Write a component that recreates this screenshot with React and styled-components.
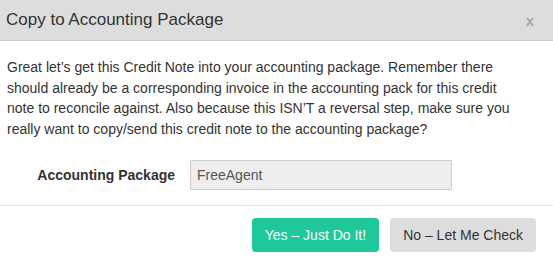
import React from 'react'
import styled, { createGlobalStyle } from "styled-components";

const GlobalStyle = createGlobalStyle`
    body {
        margin: 0;
        background: #fff;
        font-family: "Liberation Sans", Arial, sans-serif;
        color: #333;
    }
`;

const Modal = styled.div`
    width: 553px;
    height: 261px;
    background: #fff;
    display: flex;
    flex-direction: column;
    overflow: hidden;
`;

const Header = styled.div`
    height: 40px;
    background: #dddddd;
    border-bottom: 1px solid #cfcfcf;
    display: flex;
    align-items: center;
    justify-content: space-between;
    padding: 0 19px 0 6px;

    h4 {
        margin: 0;
        font-size: 17px;
        font-weight: normal;
        color: #333;
    }
`;

const Close = styled.button`
    border: 0;
    background: transparent;
    font-family: inherit;
    font-size: 15px;
    font-weight: bold;
    color: #a8a8a8;
    padding: 0;
    cursor: pointer;
`;

const Body = styled.div`
    padding: 16px 30px 0 7px;
    border-bottom: 1px solid #e5e5e5;

    p {
        margin: 0 0 21px;
        font-size: 14px;
        line-height: 20.5px;
    }
`;

const FormRow = styled.div`
    display: flex;
    align-items: center;
    gap: 15px;
    margin-bottom: 15px;

    label {
        width: 168px;
        text-align: right;
        font-size: 14px;
        font-weight: bold;
        color: #333;
    }

    input {
        width: 262px;
        height: 30px;
        box-sizing: border-box;
        background: #eeeeee;
        border: 1px solid #cccccc;
        border-radius: 1px;
        padding: 0 6px;
        font-family: inherit;
        font-size: 14px;
        color: #555;
    }
`;

const Footer = styled.div`
    display: flex;
    justify-content: flex-end;
    gap: 11px;
    padding: 12px 17px 0 0;
`;

const Button = styled.button`
    height: 34px;
    padding: 0 13px;
    border: 0;
    border-radius: 4px;
    font-family: inherit;
    font-size: 14px;
    background: ${({ $primary }) => $primary ? "#1ec89b" : "#dddddd"};
    color: ${({ $primary }) => $primary ? "#fff" : "#333"};
    cursor: pointer;
`;

function App() {
    return (
        <>
            <GlobalStyle />
            <Modal>
                <Header>
                    <h4>Copy to Accounting Package</h4>
                    <Close>x</Close>
                </Header>
                <Body>
                    <p>
                        Great let’s get this Credit Note into your accounting package. Remember there
                        should already be a corresponding invoice in the accounting pack for this credit
                        note to reconcile against. Also because this ISN’T a reversal step, make sure you
                        really want to copy/send this credit note to the accounting package?
                    </p>
                    <FormRow>
                        <label>Accounting Package</label>
                        <input value="FreeAgent" readOnly />
                    </FormRow>
                </Body>
                <Footer>
                    <Button $primary>Yes – Just Do It!</Button>
                    <Button>No – Let Me Check</Button>
                </Footer>
            </Modal>
        </>
    )
}

export default App
